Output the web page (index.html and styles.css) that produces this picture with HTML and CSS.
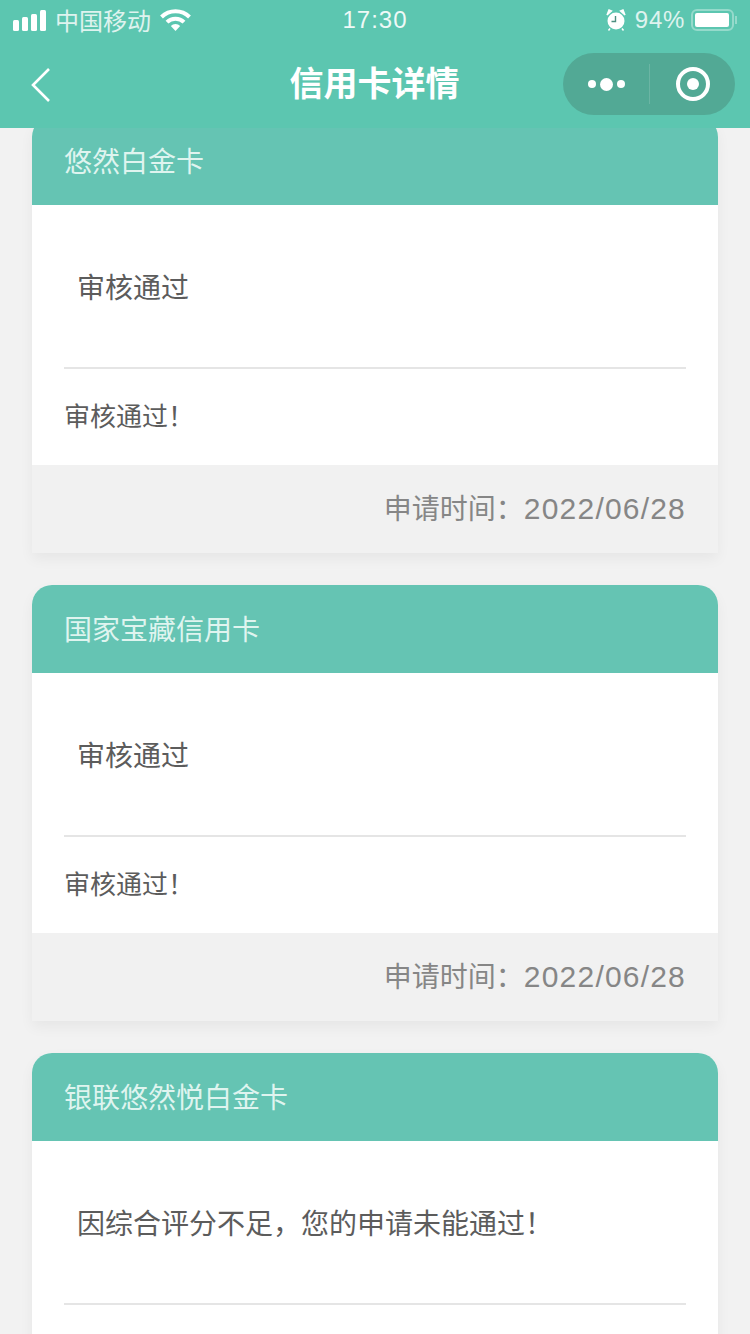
FILE: index.html
```html
<!DOCTYPE html>
<html lang="zh-CN">
<head>
    <meta charset="UTF-8">
    <meta name="viewport" content="width=device-width, initial-scale=1.0">
    <title>信用卡详情</title>
    <link rel="stylesheet" href="styles.css">
</head>
<body>
    <header class="topbar">
        <div class="status">
            <div class="status-left">
                <svg class="signal" width="33" height="21" viewBox="0 0 33 21">
                    <rect x="0" y="10" width="6" height="11" rx="1.5"/>
                    <rect x="9" y="7" width="6" height="14" rx="1.5"/>
                    <rect x="18" y="4" width="6" height="17" rx="1.5"/>
                    <rect x="27" y="0" width="6" height="21" rx="1.5"/>
                </svg>
                <span class="carrier">中国移动</span>
                <svg class="wifi" width="31" height="22" viewBox="0 0 31 22">
                    <path d="M1.5 8a20 20 0 0 1 28 0" fill="none" stroke="#fff" stroke-width="4"/>
                    <path d="M7 13.2a12 12 0 0 1 17 0" fill="none" stroke="#fff" stroke-width="4"/>
                    <path d="M10.8 17a6.8 6.8 0 0 1 9.4 0L15.5 22z" fill="#fff"/>
                </svg>
            </div>
            <div class="status-time">17:30</div>
            <div class="status-right">
                <svg class="alarm" width="20" height="22" viewBox="0 0 20 22">
                    <circle cx="10" cy="12" r="8.5" fill="#fff"/>
                    <path d="M1 6 5.5 2 3 1zM19 6 14.5 2 17 1z" fill="#fff" stroke="#fff" stroke-width="1.4"/>
                    <path d="M9.5 7v5.5H5.5" fill="none" stroke="#4d8f80" stroke-width="1.4"/>
                    <path d="M4 19.5l-1.5 2M16 19.5l1.5 2" stroke="#fff" stroke-width="1.5"/>
                </svg>
                <span class="battery-text">94%</span>
                <div class="battery"><div class="battery-level"></div></div>
                <div class="battery-cap"></div>
            </div>
        </div>
        <nav class="nav">
            <svg class="back" width="22" height="36" viewBox="0 0 22 36">
                <path d="M19 2 3 18l16 16" fill="none" stroke="#fff" stroke-width="2.6"/>
            </svg>
            <h1 class="nav-title">信用卡详情</h1>
            <div class="capsule">
                <div class="capsule-more">
                    <span class="dot"></span>
                    <span class="dot dot-big"></span>
                    <span class="dot"></span>
                </div>
                <div class="capsule-line"></div>
                <div class="capsule-close">
                    <div class="ring"><div class="ring-core"></div></div>
                </div>
            </div>
        </nav>
    </header>

    <main class="list">
        <section class="card">
            <div class="card-head">悠然白金卡</div>
            <div class="card-body">
                <div class="card-status">审核通过</div>
                <div class="card-note">审核通过！</div>
            </div>
            <div class="card-foot">申请时间：<span class="card-date">2022/06/28</span></div>
        </section>

        <section class="card">
            <div class="card-head">国家宝藏信用卡</div>
            <div class="card-body">
                <div class="card-status">审核通过</div>
                <div class="card-note">审核通过！</div>
            </div>
            <div class="card-foot">申请时间：<span class="card-date">2022/06/28</span></div>
        </section>

        <section class="card">
            <div class="card-head">银联悠然悦白金卡</div>
            <div class="card-body">
                <div class="card-status">因综合评分不足，您的申请未能通过！</div>
                <div class="card-note"></div>
            </div>
        </section>
    </main>
</body>
</html>
```

FILE: styles.css
```css
* {
    box-sizing: border-box;
}

html, body {
    height: 1334px;
    overflow: hidden;
}

body {
    margin: 0;
    background-color: #f2f2f2;
    font-family: "Liberation Sans", "Noto Sans CJK SC", sans-serif;
}

.topbar {
    position: relative;
    z-index: 2;
    height: 128px;
    background-color: #5cc6b0;
    color: #fff;
}

.status {
    height: 40px;
    padding: 0 13px;
    display: grid;
    grid-template-columns: 1fr auto 1fr;
    align-items: center;
}

.status-left {
    display: flex;
    align-items: center;
}

.signal {
    fill: #fff;
}

.carrier {
    margin-left: 9px;
    margin-bottom: 2px;
    font-size: 24px;
    opacity: 0.8;
}

.wifi {
    margin-left: 9px;
}

.status-time {
    font-size: 24px;
    letter-spacing: 1px;
    opacity: 0.9;
}

.status-right {
    display: flex;
    align-items: center;
    justify-content: flex-end;
}

.alarm {
    margin-right: 1px;
}

.battery-text {
    margin-left: 8px;
    font-size: 24px;
    letter-spacing: 0.7px;
    opacity: 0.8;
}

.battery {
    width: 43px;
    height: 22px;
    margin-left: 6px;
    padding: 2px;
    border: 2px solid rgba(255, 255, 255, 0.35);
    border-radius: 6px;
}

.battery-level {
    width: 97%;
    height: 100%;
    background-color: #fff;
    border-radius: 2px;
}

.battery-cap {
    width: 2px;
    height: 8px;
    margin-left: 1px;
    background-color: rgba(255, 255, 255, 0.35);
}

.nav {
    height: 88px;
    padding: 0 15px 0 30px;
    display: flex;
    align-items: center;
    justify-content: space-between;
    position: relative;
}

.back {
    margin-top: 2px;
}

.nav-title {
    position: absolute;
    left: 0;
    right: 0;
    margin: 0;
    padding-right: 1px;
    text-align: center;
    font-size: 34px;
    font-weight: bold;
    line-height: 88px;
}

.capsule {
    width: 172px;
    height: 62px;
    display: flex;
    align-items: center;
    background-color: #52a995;
    border-radius: 31px;
}

.capsule-more {
    width: 86px;
    display: flex;
    align-items: center;
    justify-content: center;
    gap: 4px;
}

.dot {
    width: 8px;
    height: 8px;
    background-color: #fff;
    border-radius: 50%;
}

.dot-big {
    width: 13px;
    height: 13px;
}

.capsule-line {
    width: 1px;
    height: 40px;
    background-color: rgba(255, 255, 255, 0.15);
}

.capsule-close {
    flex: 1;
    display: flex;
    justify-content: center;
}

.ring {
    width: 34px;
    height: 34px;
    display: flex;
    align-items: center;
    justify-content: center;
    border: 4px solid #fff;
    border-radius: 50%;
}

.ring-core {
    width: 12px;
    height: 12px;
    background-color: #fff;
    border-radius: 50%;
}

/* the page is scrolled a little, the first card goes under the top bar */
.list {
    height: 1217px;
    margin-top: -11px;
    padding: 0 32px;
    overflow: hidden;
    display: flex;
    flex-direction: column;
    gap: 32px;
}

.card {
    flex-shrink: 0;
    border-radius: 20px 20px 0 0;
    background-color: #fff;
    box-shadow: 0 6px 14px rgba(0, 0, 0, 0.05);
}

.card-head {
    height: 88px;
    padding-left: 32px;
    border-radius: 20px 20px 0 0;
    background-color: #65c4b3;
    color: #dff4ef;
    font-size: 28px;
    line-height: 92px;
}

.card-body {
    padding: 0 32px;
    color: #5c5c5c;
}

.card-status {
    height: 164px;
    padding: 0 13px;
    border-bottom: 2px solid #e5e5e5;
    font-size: 28px;
    line-height: 168px;
}

.card-note {
    height: 96px;
    font-size: 26px;
    line-height: 96px;
}

.card-foot {
    height: 88px;
    padding-right: 32px;
    background-color: #f1f1f1;
    color: #868686;
    font-size: 28px;
    line-height: 88px;
    text-align: right;
}

.card-date {
    font-size: 30px;
    letter-spacing: 1.2px;
}
```
